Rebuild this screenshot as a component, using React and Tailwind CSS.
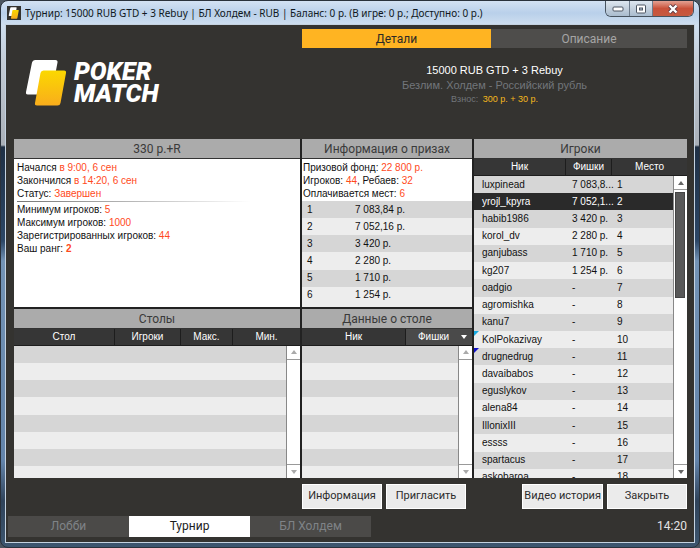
import React, { useState } from 'react';
import clsx from 'clsx';

const PLAYERS = [
  { nick: 'luxpinead', chips: '7 083,8...' },
  { nick: 'yrojl_kpyra', chips: '7 052,1...' },
  { nick: 'habib1986', chips: '3 420 р.' },
  { nick: 'korol_dv', chips: '2 280 р.' },
  { nick: 'ganjubass', chips: '1 710 р.' },
  { nick: 'kg207', chips: '1 254 р.' },
  { nick: 'oadgio' },
  { nick: 'agromishka' },
  { nick: 'kanu7' },
  { nick: 'KolPokazivay', mark: 'text-[#17a9e0]' },
  { nick: 'drugnedrug', mark: 'text-[#0f0fc8]' },
  { nick: 'davaibabos' },
  { nick: 'eguslykov' },
  { nick: 'alena84' },
  { nick: 'IllonixIII' },
  { nick: 'essss' },
  { nick: 'spartacus' },
  { nick: 'askobaroa' },
];

const PRIZES = ['7 083,84 р.', '7 052,16 р.', '3 420 р.', '2 280 р.', '1 710 р.', '1 254 р.'];

const EMPTY_ROWS = [1, 2, 3, 4, 5, 6, 7, 8];

const Cards = ({ className }) => (
  <svg viewBox="0 0 42 48" className={className} aria-hidden="true">
    <defs>
      <linearGradient id="gold" x1="0" y1="0" x2="0" y2="1">
        <stop offset="0" stopColor="#fbd800" />
        <stop offset="1" stopColor="#f9ad1c" />
      </linearGradient>
    </defs>
    <path d="M9 1h20.500q2.500 0 2 2.500l-5.500 29q-.5 3-3 3H2q-2.500 0-2-2.500L6 3.500q.5-2.500 3-2.500z" fill="#fff" />
    <path
      d="M17.500 11.500h20.500q2.500 0 2 2.500l-5.500 30q-.5 2.500-3 2.500H11q-2.500 0-2-2.500L14.500 14q.5-2.500 3-2.500z"
      fill="url(#gold)"
    />
  </svg>
);

const Val = ({ children }) => <span className="text-[#ff4a1c]">{children}</span>;

const Panel = ({ title, className, children }) => (
  <section className={clsx('flex flex-col min-h-0 min-w-0 overflow-hidden bg-white', className)}>
    <h2 className="shrink-0 h-5 bg-[#ababab] border-b border-[#333] text-center text-[12px] leading-5 text-[#3a3a3a] font-[Roboto,sans-serif]">
      {title}
    </h2>
    {children}
  </section>
);

const Th = ({ className, children, ...rest }) => (
  <th
    className={clsx('h-[17px] p-0 leading-4 border-r border-b border-[#1d1d1d] font-normal text-white last:border-r-0', className)}
    {...rest}
  >
    {children}
  </th>
);

const Scrollbar = ({ active }) => (
  <div className="absolute right-0 top-[17px] bottom-0 w-[14px] flex flex-col bg-white border-l border-[#888]">
    <button
      aria-label="Вверх"
      className={clsx('h-[14px] flex items-center justify-center border-b border-[#999]', active ? 'text-[#666]' : 'text-[#aaa]')}
    >
      <svg viewBox="0 0 6 4" className="w-1.5 h-1"><path d="M3 0l3 4H0z" fill="currentColor" /></svg>
    </button>
    <div className="flex-1 pt-0.5 pl-px pr-0.5">
      {active && <div className="h-[39%] bg-[#585858] border border-[#444]" />}
    </div>
    <button
      aria-label="Вниз"
      className={clsx('h-[14px] flex items-center justify-center border-t border-[#999]', active ? 'text-[#666]' : 'text-[#aaa]')}
    >
      <svg viewBox="0 0 6 4" className="w-1.5 h-1"><path d="M0 0h6L3 4z" fill="currentColor" /></svg>
    </button>
  </div>
);

const EmptyBody = ({ cols }) => (
  <tbody>
    {EMPTY_ROWS.map((n) => (
      <tr key={n} className="h-[17px] odd:bg-[#d6d6d6] even:bg-[#ededed]">
        <td colSpan={cols} className="p-0" />
      </tr>
    ))}
  </tbody>
);

const TitleBar = () => (
  <header className="flex shrink-0 h-6 items-start">
    <div className="flex flex-1 min-w-0 h-6 items-center gap-1 pl-px">
      <span className="flex items-center justify-center size-[14px] bg-[#343330]">
        <Cards className="size-3" />
      </span>
      <h1 className="truncate text-[10px] text-[#101820] font-['Noto_Sans','Open_Sans',sans-serif]">
        Турнир: 15000 RUB GTD + 3 Rebuy | БЛ Холдем - RUB | Баланс: 0 р. (В игре: 0 р.; Доступно: 0 р.)
      </h1>
    </div>
    <div className="flex h-4 rounded-b-md overflow-hidden border border-t-0 border-[#47535f]">
      <button aria-label="Свернуть" className="w-6 flex items-center justify-center border-r border-[#6e7c8c] bg-linear-to-b from-[#dde6ef] via-[#c4d0dd] to-[#a9bccf]">
        <svg viewBox="0 0 12 6" className="w-3 h-1.5"><rect x="1" y="1" width="10" height="4" rx="1" fill="#fff" stroke="#4c5562" /></svg>
      </button>
      <button aria-label="Развернуть" className="w-[23px] flex items-center justify-center border-r border-[#6e7c8c] bg-linear-to-b from-[#dde6ef] via-[#c4d0dd] to-[#a9bccf]">
        <svg viewBox="0 0 12 10" className="w-3 h-2.5">
          <rect x="1.500" y="1" width="9" height="8" rx="1" fill="#fff" stroke="#4c5562" />
          <rect x="4.500" y="4" width="3" height="2" fill="#b9c7d6" stroke="#4c5562" />
        </svg>
      </button>
      <button aria-label="Закрыть окно" className="w-10 flex items-center justify-center bg-linear-to-b from-[#e3a193] via-[#c9513a] to-[#c65a40]">
        <svg viewBox="0 0 12 10" className="w-3 h-2.5">
          <path d="M2.500 1.500l7 7M9.500 1.500l-7 7" stroke="#5a3a44" strokeWidth="4" />
          <path d="M2.500 1.500l7 7M9.500 1.500l-7 7" stroke="#fff" strokeWidth="2.400" />
        </svg>
      </button>
    </div>
  </header>
);

const TournamentHeader = () => {
  const [tab, setTab] = useState('details');
  const tabClass = (name) => (tab === name ? 'bg-[#ffb422] text-[#2c2a26]' : 'bg-[#4e4d4b] text-[#a5a5a5]');

  return (
    <div className="shrink-0 grid grid-cols-[286fr_385fr] gap-0.5 pt-1 pb-8">
      <div className="flex items-start gap-1.5 pt-[30px] pl-3">
        <Cards className="w-[42px] h-12" />
        <div className="pt-0.5 text-[25px] leading-[22px] font-black italic text-white font-[Roboto,sans-serif]">
          <p>POKER</p>
          <p>MATCH</p>
        </div>
      </div>
      <div>
        <nav className="grid grid-cols-[189fr_196fr] h-[19px] text-[12px] font-[Roboto,sans-serif]">
          <button className={tabClass('details')} onClick={() => setTab('details')}>Детали</button>
          <button className={tabClass('info')} onClick={() => setTab('info')}>Описание</button>
        </nav>
        <div className="mt-3.5 text-center">
          <p className="text-[11px] leading-4 text-white">15000 RUB GTD + 3 Rebuy</p>
          <p className="text-[11px] leading-[14px] text-[#72767b]">Безлим. Холдем - Российский рубль</p>
          <p className="text-[9px] leading-[14px] text-[#72767b]">
            Взнос: <span className="pl-0.5 text-[#f5b81c]">300 р. + 30 р.</span>
          </p>
        </div>
      </div>
    </div>
  );
};

const PlayersTable = () => {
  const [selected, setSelected] = useState(1);

  return (
    <div className="relative flex-1 min-h-0 overflow-hidden">
      <table className="w-full h-[327px] table-fixed border-separate border-spacing-0">
        <colgroup>
          <col />
          <col className="w-[46px]" />
          <col className="w-[61px]" />
          <col className="w-[14px]" />
        </colgroup>
        <thead className="bg-[#363636]">
          <tr>
            <Th>Ник</Th>
            <Th>Фишки</Th>
            <Th colSpan={2}>Место</Th>
          </tr>
        </thead>
        <tbody>
          {PLAYERS.map((player, i) => (
            <tr
              key={player.nick}
              onClick={() => setSelected(i)}
              className={clsx('h-[17px] leading-4', selected === i ? 'bg-[#2a2a2a] text-white' : 'text-[#111] odd:bg-[#d6d6d6] even:bg-[#ededed]')}
            >
              <td className="relative p-0 pl-2">
                {player.mark && (
                  <svg viewBox="0 0 5 5" className={clsx('absolute left-0 top-0 size-[5px]', player.mark)}>
                    <path d="M0 0h5L0 5z" fill="currentColor" />
                  </svg>
                )}
                {player.nick}
              </td>
              <td className="p-0 pl-1.5 whitespace-nowrap">{player.chips || '-'}</td>
              <td className="p-0 pl-[5px]">{i + 1}</td>
              <td className="p-0" />
            </tr>
          ))}
        </tbody>
      </table>
      <Scrollbar active />
    </div>
  );
};

const Lobby = () => (
  <main className="flex-1 min-h-0 grid grid-rows-[168fr_170fr] grid-cols-[286fr_170fr_213fr] gap-0.5 bg-[#222]">
    <Panel title="330 р.+R">
      <div className="px-[3px] pt-0.5 leading-[13px] text-[#111]">
        <p>Начался <Val>в 9:00, 6 сен</Val></p>
        <p>Закончился <Val>в 14:20, 6 сен</Val></p>
        <p>Статус: <Val>Завершен</Val></p>
        <div className="w-5/6 h-px mt-px mb-px bg-linear-to-r from-[#777] to-white" />
        <p>Минимум игроков: <Val>5</Val></p>
        <p>Максимум игроков: <Val>1000</Val></p>
        <p>Зарегистрированных игроков: <Val>44</Val></p>
        <p>Ваш ранг: <b><Val>2</Val></b></p>
      </div>
    </Panel>

    <Panel title="Информация о призах">
      <div className="shrink-0 px-px pt-0.5 pb-px leading-[13px] text-[#111]">
        <p>Призовой фонд: <Val>22 800 р.</Val></p>
        <p>Игроков: <Val>44</Val>, Ребаев: <Val>32</Val></p>
        <p>Оплачивается мест: <Val>6</Val></p>
      </div>
      <div className="flex-1 min-h-0 bg-[#ededed]">
        <table className="w-full h-[103px] table-fixed text-[#111]">
          <tbody>
            {PRIZES.map((prize, i) => (
              <tr key={prize} className="h-[17px] leading-4 odd:bg-[#d6d6d6] even:bg-[#ededed]">
                <td className="w-[53px] p-0 pl-[5px]">{i + 1}</td>
                <td className="p-0">{prize}</td>
              </tr>
            ))}
          </tbody>
        </table>
      </div>
    </Panel>

    <Panel title="Игроки" className="row-span-2">
      <PlayersTable />
    </Panel>

    <Panel title="Столы">
      <div className="relative flex-1 min-h-0 overflow-hidden">
        <table className="w-full h-[155px] table-fixed border-separate border-spacing-0">
          <thead className="bg-[#363636]">
            <tr>
              <Th>Стол</Th>
              <Th className="w-[66px]">Игроки</Th>
              <Th className="w-[52px]">Макс.</Th>
              <Th className="w-[67px]">Мин.</Th>
            </tr>
          </thead>
          <EmptyBody cols={4} />
        </table>
        <Scrollbar />
      </div>
    </Panel>

    <Panel title="Данные о столе">
      <div className="relative flex-1 min-h-0 overflow-hidden">
        <table className="w-full h-[155px] table-fixed border-separate border-spacing-0">
          <thead className="bg-[#363636]">
            <tr>
              <Th>Ник</Th>
              <Th className="w-[66px] bg-[#4a4a4a]">
                <span className="flex items-center justify-between pl-3 pr-[5px]">
                  Фишки
                  <svg viewBox="0 0 6 4" className="w-1.5 h-1"><path d="M0 0h6L3 4z" fill="#fff" /></svg>
                </span>
              </Th>
            </tr>
          </thead>
          <EmptyBody cols={2} />
        </table>
        <Scrollbar />
      </div>
    </Panel>
  </main>
);

const ActionButton = ({ children }) => (
  <button className="min-w-20 h-[25px] px-px whitespace-nowrap bg-[#ebebeb] border border-white text-[11px] text-[#2c2c2c]">
    {children}
  </button>
);

const Footer = () => (
  <footer className="shrink-0 pb-[5px] font-[Roboto,sans-serif]">
    <div className="grid grid-cols-[286fr_385fr] gap-0.5 pt-1.5">
      <span />
      <div className="flex gap-1">
        <ActionButton>Информация</ActionButton>
        <ActionButton>Пригласить</ActionButton>
        <span className="flex-1" />
        <ActionButton>Видео история</ActionButton>
        <ActionButton>Закрыть</ActionButton>
      </div>
    </div>
    <nav className="flex items-center pt-[7px] -ml-1.5 text-[12px] leading-[21px]">
      <button className="w-[121px] h-[21px] bg-[#4b4a48] text-[#7f8387]">Лобби</button>
      <button className="w-[121px] h-[21px] bg-white text-[#1c1c1c]">Турнир</button>
      <button className="w-[121px] h-[21px] bg-[#4b4a48] text-[#7f8387]">БЛ Холдем</button>
      <time className="ml-auto text-[#e4e4e4]">14:20</time>
    </nav>
  </footer>
);

export default function App() {
  return (
    <div className="bg-[#4b5560]">
      <div className="h-screen flex flex-col px-[5px] pb-[5px] rounded-lg border border-[#2a323c] bg-[linear-gradient(to_bottom,#d3e2f3_0,#b9d0ea_12px,#cfdff0_24px,#c3ccd6_60px,#a9b0b8_144px,#1f3045_146px,#2c4766_240px,#7393b5_260px,#6384aa_460px,#2f435a_500px,#3d566f_100%)]">
        <TitleBar />
        <div className="flex-1 min-h-0 flex flex-col pl-2 pr-[7px] bg-[#343330] outline outline-[#c4d2e0] text-[10px] font-['Liberation_Sans',Arial,sans-serif]">
          <TournamentHeader />
          <Lobby />
          <Footer />
        </div>
      </div>
    </div>
  );
}
